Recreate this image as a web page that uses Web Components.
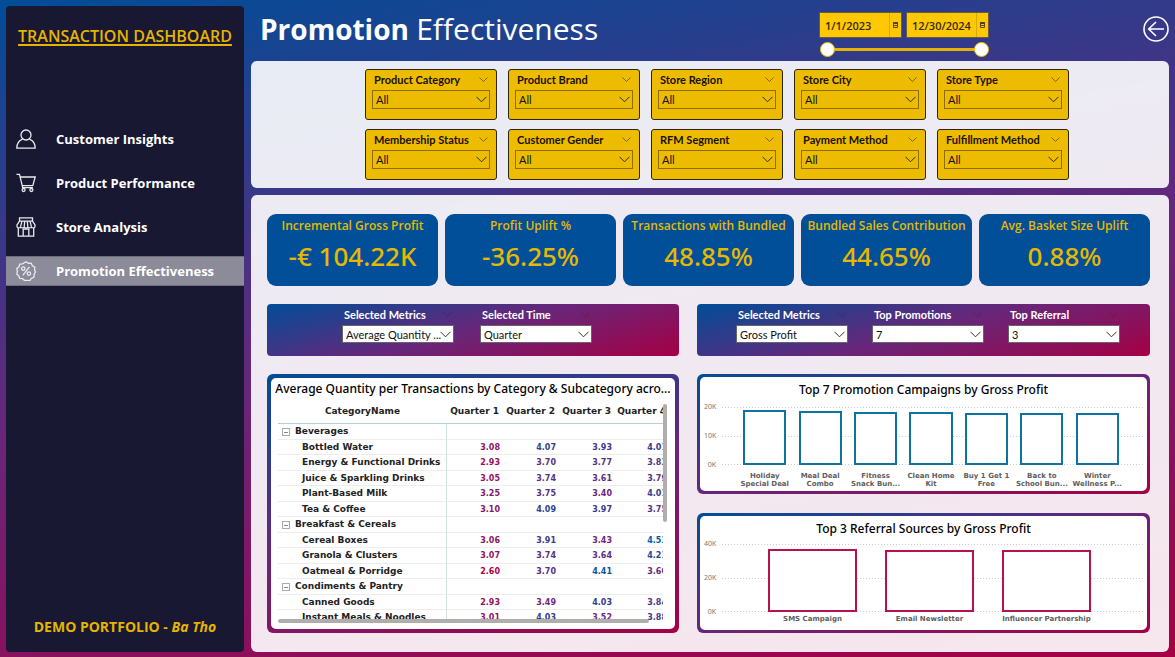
<!DOCTYPE html>
<html lang="en">
<head>
<meta charset="utf-8">
<meta name="viewport" content="width=device-width, initial-scale=1">
<title>Transaction Dashboard - Promotion Effectiveness</title>
<style>
  :root {
    --gold: #edbb00;
    --brand-stops: #004d98, #68267a 50%, #a50044;
    --brand: linear-gradient(165deg, var(--brand-stops));
    --data-font: "DejaVu Sans", Verdana, sans-serif;
    --compact-font: Lato, "Open Sans", sans-serif;
  }
  body {
    margin: 0;
    font-family: "Open Sans", "Noto Sans", sans-serif;
    background: linear-gradient(170deg, var(--brand-stops));
    min-height: 100vh;
  }
</style>
</head>
<body>
<dashboard-app></dashboard-app>

<script>
const define = (name, html) => customElements.define(name, class extends HTMLElement {
  constructor() {
    super();
    this.attachShadow({ mode: "open" });
  }
  connectedCallback() {
    const t = document.createElement("template");
    t.innerHTML = "<style>*{box-sizing:border-box}</style>" + (typeof html === "function" ? html(this) : html);
    this.shadowRoot.replaceChildren(t.content.cloneNode(true));
  }
});
const attr = (el, name) => el.getAttribute(name) || "";
const esc = s => s.replace(/&/g, "&amp;");

/* Line icons of the side menu */
const icons = {
  user: '<circle cx="10" cy="6" r="5"/><path d="M6.600 10.200C3 11.600.8 14.600.8 19.200h18.400C19.200 14.600 17 11.600 13.400 10.200"/>',
  cart: '<path d="M.5 1.300h3l3.200 13.400h10.200M4.600 4h14.600l-2.400 8.600H6.300"/><circle cx="7.600" cy="17" r="1.500"/><circle cx="15.400" cy="17" r="1.500"/>',
  store: '<path d="M3.500.8h13v3.400h-13zM3.500 4.200 1 8v1.400c0 2 3.600 2 3.600 0 0 2 3.600 2 3.600 0 0 2 3.600 2 3.600 0 0 2 3.600 2 3.600 0 0 2 3.600 2 3.600 0V8l-2.500-3.800M6 4.400 4.600 9.400M8.700 4.400l-.5 5M11.300 4.400l.5 5M14 4.400l1.400 5M2.300 11v8.200h15.400V11M7.200 19V12.200h5.600V19"/>',
  promo: '<path d="M10 .8l2.400 1.600 2.800-.2 1.200 2.500 2.400 1.500-.2 2.800L19.400 11l-1.300 2.500-.2 2.800-2.600 1.200-1.500 2.200-2.800-.3L8.400 19.300 6.600 17.700 3.800 17.500 2.700 14.900.800 13l.6-2.800L.8 7.500 3 5.800l.8-2.700 2.700-.3z"/><path d="M13.400 5.800 6.800 14.400"/><circle cx="7.300" cy="7.600" r="1.700"/><circle cx="12.900" cy="12.600" r="1.700"/>'
};

define("nav-item", el => `
  <style>
    :host { display: block; }
    a { display: flex; align-items: center; gap: 20px; height: 30px; padding: 0 10px; color: #fff; text-decoration: none; font-size: 13px; font-weight: 700; white-space: nowrap; border: 1px solid transparent; border-width: 1px 0; }
    a[aria-current] { background: #8b8b99; border-color: #6d6d7d; }
    svg { width: 20px; height: 20px; fill: none; stroke: #e9e9ee; stroke-width: 1.3; flex: none; }
  </style>
  <a href="#" ${el.hasAttribute("active") ? 'aria-current="page"' : ""}>
    <svg viewBox="0 0 20 20" aria-hidden="true">${icons[attr(el, "icon")]}</svg><slot></slot></a>`);

define("side-bar", `
  <style>
    :host { display: flex; flex-direction: column; background: #181832; border-radius: 4px; color: #e6b400; }
    h2 { margin: 18px 0 0; font-size: 16px; line-height: 24px; font-weight: 600; text-align: center; white-space: nowrap; text-decoration: underline 2px; text-underline-offset: 2px; text-decoration-skip-ink: none; }
    nav { display: grid; gap: 14px; margin-top: 76px; }
    footer { margin-top: auto; padding-bottom: 14px; font-size: 14px; line-height: 22px; font-weight: 700; text-align: center; }
  </style>
  <h2>TRANSACTION DASHBOARD</h2>
  <nav aria-label="Reports">
    <nav-item icon="user">Customer Insights</nav-item>
    <nav-item icon="cart">Product Performance</nav-item>
    <nav-item icon="store">Store Analysis</nav-item>
    <nav-item icon="promo" active>Promotion Effectiveness</nav-item>
  </nav>
  <footer>DEMO PORTFOLIO - <em>Ba Tho</em></footer>`);

const calendar = '<svg viewBox="0 0 11 8" aria-hidden="true"><path d="M3 1h5v2H3z" fill="#4a3d12"/><path d="M3.500 1.500h4v5h-4zM3 4.500h5" fill="none" stroke="#5b4a10"/></svg>';
define("date-range", `
  <style>
    :host { display: grid; grid-template-columns: 83px 83px; gap: 3px 4px; }
    .field { display: flex; align-items: center; height: 26px; background: #ffc800; border: 1px solid #6b5a3c; }
    input[type=text] { flex: 1; min-width: 0; height: 100%; padding: 0 0 0 5px; border: 0; border-right: 1px solid #d9a900; background: none; color: #332b14; font-size: 11px; font-weight: 600; font-family: inherit; }
    svg { width: 11px; height: 8px; flex: none; }
    .track { grid-column: 1 / -1; display: grid; height: 17px; align-items: center; background: linear-gradient(#e6b400, #e6b400) center / 150px 3px no-repeat; margin-left: 1px; }
    input[type=range] { grid-area: 1 / 1; appearance: none; width: 100%; height: 16px; margin: 0; background: none; pointer-events: none; }
    input[type=range]::-webkit-slider-thumb { appearance: none; width: 15px; height: 15px; border-radius: 50%; background: #fff; border: 1px solid #edbb00; pointer-events: auto; }
  </style>
  <div class="field"><input type="text" aria-label="Start date" value="1/1/2023">${calendar}</div>
  <div class="field"><input type="text" aria-label="End date" value="12/30/2024">${calendar}</div>
  <div class="track"><input type="range" aria-label="Range start" min="0" max="100" value="0"><input type="range" aria-label="Range end" min="0" max="100" value="100"></div>`);

define("page-header", `
  <style>
    :host { display: flex; align-items: flex-start; padding-left: 9px; height: 54px; color: #fff; }
    h1 { margin: 0; font-size: 28px; line-height: 46px; font-weight: 400; white-space: nowrap; flex: 0 0 559px; }
    h1 span { font-size: 30px; }
    date-range { margin-top: 6px; }
    button { margin: 10px 0 0 auto; padding: 0; border: 0; background: none; width: 26px; height: 26px; cursor: pointer; }
    svg { display: block; width: 26px; height: 26px; fill: none; stroke: #fff; stroke-width: 1.6; }
  </style>
  <h1><b>Promotion</b> <span>Effectiveness</span></h1>
  <date-range></date-range>
  <button aria-label="Back"><svg viewBox="0 0 26 26"><circle cx="13" cy="13" r="12"/><path d="M21 13H5.500M13 6l-7.300 7 7.300 7"/></svg></button>`);

/* A labelled drop-down; "card" puts it on a gold tile */
define("slicer-field", el => `
  <style>
    :host { display: block; font-family: var(--compact-font); color: #fff; }
    :host([card]) { color: #181000; background: var(--gold); border: 1px solid #2c260e; border-radius: 3px; padding: 0 6px 10px; }
    .top { display: flex; justify-content: space-between; align-items: center; height: 18px; padding: 0 2px; }
    label { font-size: 11px; font-weight: 700; white-space: nowrap; }
    .top svg { width: 9px; height: 5px; opacity: .6; flex: none; }
    .box { display: grid; align-items: center; margin-top: 2px; }
    select { grid-area: 1 / 1; appearance: none; width: 100%; height: 18px; padding: 0 0 0 3px; border: 1px solid #666; border-radius: 0; background: #fff; color: #111; font: inherit; font-size: 11px; }
    :host([card]) select { background: transparent; border-color: #8a6d08; height: 19px; }
    .box svg { grid-area: 1 / 1; justify-self: end; width: 11px; height: 7px; margin-right: 3px; pointer-events: none; }
    svg { fill: none; stroke: #33301f; }
  </style>
  <div class="top"><label for="s">${attr(el, "label")}</label><svg viewBox="0 0 9 5" aria-hidden="true"><path d="M.5.5l4 4 4-4"/></svg></div>
  <div class="box"><select id="s"><option>${attr(el, "value")}</option></select><svg viewBox="0 0 11 7" aria-hidden="true"><path d="M.5.8l5 5 5-5"/></svg></div>`);

define("filter-panel", () => `
  <style>
    :host { display: grid; grid-template-columns: repeat(5, 132px); gap: 9px 11px; justify-content: center; padding: 8px 0 8px 14px; background: rgba(255,255,255,.9); border-radius: 6px; }
  </style>
  ${["Product Category", "Product Brand", "Store Region", "Store City", "Store Type", "Membership Status", "Customer Gender", "RFM Segment", "Payment Method", "Fulfillment Method"]
    .map(l => `<slicer-field card label="${l}" value="All"></slicer-field>`).join("")}`);

define("kpi-card", el => `
  <style>
    :host { display: block; background: #004f98; color: #e6b800; border-radius: 9px; text-align: center; padding: 2px 0 10px; white-space: nowrap; }
    h3 { margin: 0; font-size: 12px; line-height: 20px; font-weight: 600; }
    p { margin: 0; font-family: "Noto Sans", sans-serif; font-weight: 500; font-size: 26px; line-height: 40px; }
  </style>
  <h3>${attr(el, "label")}</h3><p><slot></slot></p>`);

define("control-bar", `
  <style>
    :host { display: grid; grid-auto-flow: column; grid-auto-columns: 112px; justify-content: center; column-gap: 24px; padding: 1px 0 13px; background: var(--brand); border-radius: 4px; }
  </style>
  <slot></slot>`);

define("report-card", el => `
  <style>
    :host { display: flex; flex-direction: column; background: var(--brand); border-radius: 6px; padding: var(--frame, 4px); min-width: 0; }
    section { flex: 1; min-width: 0; background: #fff; border-radius: 5px; padding: 0 4px; display: flex; flex-direction: column; }
    h3 { margin: 0; font-family: "Noto Sans", sans-serif; font-size: 12px; line-height: var(--title-line, 22px); font-weight: 500; color: #000; text-align: center; white-space: nowrap; }
  </style>
  <section><h3>${esc(attr(el, "heading"))}</h3><slot></slot></section>`);

const rows = [
  ["Beverages"],
  ["Bottled Water", "3.08", "4.07", "3.93", "4.01"],
  ["Energy & Functional Drinks", "2.93", "3.70", "3.77", "3.83"],
  ["Juice & Sparkling Drinks", "3.05", "3.74", "3.61", "3.79"],
  ["Plant-Based Milk", "3.25", "3.75", "3.40", "4.01"],
  ["Tea & Coffee", "3.10", "4.09", "3.97", "3.75"],
  ["Breakfast & Cereals"],
  ["Cereal Boxes", "3.06", "3.91", "3.43", "4.53"],
  ["Granola & Clusters", "3.07", "3.74", "3.64", "4.21"],
  ["Oatmeal & Porridge", "2.60", "3.70", "4.41", "3.60"],
  ["Condiments & Pantry"],
  ["Canned Goods", "2.93", "3.49", "4.03", "3.84"],
  ["Instant Meals & Noodles", "3.01", "4.03", "3.52", "3.88"]
];
/* Red for low values, through purple, to blue for high ones */
const shade = v => {
  const stops = [[2.6, [176, 0, 72]], [3.55, [108, 42, 122]], [4.05, [52, 62, 142]], [4.53, [0, 92, 164]]];
  let i = 0;
  while (i < stops.length - 2 && v > stops[i + 1][0]) i++;
  const [a, ca] = stops[i], [b, cb] = stops[i + 1], t = (v - a) / (b - a);
  return `rgb(${ca.map((c, k) => Math.round(c + (cb[k] - c) * t)).join(",")})`;
};

define("quantity-matrix", () => `
  <style>
    :host { display: grid; grid-template-columns: minmax(0, 1fr) 4px; padding: 0 4px 6px 3px; font-family: var(--data-font); flex: 1; }
    .view { height: 223px; overflow: hidden; grid-area: 1 / 1; }
    table { border-collapse: separate; border-spacing: 0; table-layout: fixed; width: 392px; font-size: 9px; line-height: 13px; font-weight: 700; color: #222; }
    th, td { padding: 0; font-weight: 700; white-space: nowrap; }
    thead th { height: 24px; border-bottom: 1px solid #b5cdd6; padding-right: 4px; text-align: right; }
    thead th:first-child { text-align: center; padding: 0; }
    tbody th { text-align: left; border-right: 1px solid #cfe3e0; border-bottom: 1px solid #ededed; padding-left: 24px; }
    tbody td { text-align: right; border-bottom: 1px solid #ededed; font-size: 8px; padding-right: 3px; }
    tbody tr { height: 15px; }
    tbody tr:nth-child(odd) { height: 16px; }
    tbody th.group { padding-left: 4px; }
    button { width: 8px; height: 8px; margin: 0 5px 0 0; padding: 0; border: 1px solid #aaa; background: linear-gradient(#888, #888) center / 4px 1px no-repeat; vertical-align: -1px; }
    .bar { background: #b0aeac; border-radius: 2px; }
    .v { grid-area: 1 / 2; height: 118px; margin-top: 4px; }
    .h { grid-area: 1 / 1; align-self: end; height: 4px; width: 371px; }
  </style>
  <div class="view"><table>
    <colgroup><col style="width:169px"><col span="3" style="width:56px"><col style="width:55px"></colgroup>
    <thead><tr><th>CategoryName</th><th>Quarter 1</th><th>Quarter 2</th><th>Quarter 3</th><th>Quarter 4</th></tr></thead>
    <tbody>${rows.map(([n, ...v]) => v.length
      ? `<tr><th scope="row">${esc(n)}</th>${v.map(x => `<td style="color:${shade(+x)}">${x}</td>`).join("")}</tr>`
      : `<tr><th scope="row" class="group"><button aria-label="Collapse"></button>${esc(n)}</th><td></td><td></td><td></td><td></td></tr>`).join("")}</tbody>
  </table></div>
  <div class="bar v"></div><div class="bar h"></div>`);

/* Outlined column chart: max, ticks and a "name=value" list come from attributes */
define("column-chart", el => {
  const max = +attr(el, "max");
  const data = attr(el, "data").split(";").map(s => s.split("="));
  return `
  <style>
    :host { display: grid; grid-template-columns: 12px 1fr; column-gap: 6px; padding: var(--above) 0 0; font-family: var(--data-font); }
    .ticks { display: flex; flex-direction: column; justify-content: space-between; margin: -4px 0; font: 7px/8px "Noto Sans", sans-serif; color: #777; text-align: right; }
    .plot { height: var(--plot); border-top: 1px solid transparent; }
    .plot, .names { display: grid; grid-template-columns: repeat(${data.length}, minmax(0, 1fr)); padding: 0 var(--end) 0 var(--start); justify-items: center; }
    .plot { align-items: end; background:
      repeating-linear-gradient(90deg, transparent 0 1px, #fff 1px 3px),
      linear-gradient(#ccc, #ccc) top / 100% 1px no-repeat, linear-gradient(#ccc, #ccc) center / 100% 1px no-repeat, linear-gradient(#ccc, #ccc) bottom / 100% 1px no-repeat; background-origin: border-box; }
    .col { width: var(--bar); background: #fff; border: 2px solid var(--ink); }
    .names { grid-column: 2; font-size: 7px; line-height: 8px; font-weight: 700; color: #605e5c; text-align: center; padding-top: var(--drop); white-space: nowrap; }
  </style>
  <div class="ticks">${attr(el, "ticks").split(",").map(t => `<span>${t}</span>`).join("")}</div>
  <div class="plot">${data.map(d => `<div class="col" style="height:${d[1] / max * 100}%"></div>`).join("")}</div>
  <div class="names">${data.map(d => `<span>${d[0].replace("|", "<br>")}</span>`).join("")}</div>`;
});

define("report-panel", `
  <style>
    :host { display: grid; grid-template-columns: minmax(0, 412fr) minmax(0, 453fr); gap: 18px; align-content: start; padding: 19px 19px 19px 16px; background: rgba(255,255,255,.9); border-radius: 6px; }
    .kpis { grid-column: 1 / -1; display: grid; grid-template-columns: repeat(5, minmax(0, 1fr)); gap: 7px; }
    .charts { display: grid; grid-template-rows: 1fr 1fr; gap: 19px; min-width: 0; --frame: 3px; --title-line: 25px; }
    control-bar.left { column-gap: 26px; padding-right: 12px; }
    control-bar.right { padding-left: 9px; }
    .promo { --ink: #0f73a0; --above: 5px; --plot: 58px; --start: 15px; --end: 18px; --drop: 7px; --bar: 78%; }
    .referral { --ink: #b8114f; --above: 3px; --plot: 68px; --start: 32px; --end: 38px; --drop: 3px; --bar: 76%; }
  </style>
  <div class="kpis">
    <kpi-card label="Incremental Gross Profit">-€ 104.22K</kpi-card>
    <kpi-card label="Profit Uplift %">-36.25%</kpi-card>
    <kpi-card label="Transactions with Bundled">48.85%</kpi-card>
    <kpi-card label="Bundled Sales Contribution">44.65%</kpi-card>
    <kpi-card label="Avg. Basket Size Uplift">0.88%</kpi-card>
  </div>
  <control-bar class="left">
    <slicer-field label="Selected Metrics" value="Average Quantity ..."></slicer-field>
    <slicer-field label="Selected Time" value="Quarter"></slicer-field>
  </control-bar>
  <control-bar class="right">
    <slicer-field label="Selected Metrics" value="Gross Profit"></slicer-field>
    <slicer-field label="Top Promotions" value="7"></slicer-field>
    <slicer-field label="Top Referral" value="3"></slicer-field>
  </control-bar>
  <report-card heading="Average Quantity per Transactions by Category & Subcategory acro..."><quantity-matrix></quantity-matrix></report-card>
  <div class="charts">
    <report-card heading="Top 7 Promotion Campaigns by Gross Profit">
      <column-chart class="promo" max="20" ticks="20K,10K,0K" data="Holiday|Special Deal=19.4;Meal Deal|Combo=18.9;Fitness|Snack Bun...=18.6;Clean Home|Kit=18.6;Buy 1 Get 1|Free=18.3;Back to|School Bun...=18.2;Winter|Wellness P...=18.2"></column-chart>
    </report-card>
    <report-card heading="Top 3 Referral Sources by Gross Profit">
      <column-chart class="referral" max="40" ticks="40K,20K,0K" data="SMS Campaign=37.9;Email Newsletter=36.9;Influencer Partnership=36.9"></column-chart>
    </report-card>
  </div>`);

define("dashboard-app", `
  <style>
    :host { display: grid; grid-template-columns: 238px minmax(0, 1fr); column-gap: 7px; min-height: 100vh; padding: 6px 6px 5px; box-sizing: border-box; }
    main { display: grid; grid-template-rows: auto auto 1fr; row-gap: 7px; min-width: 0; }
    page-header { margin-bottom: -6px; }
  </style>
  <side-bar></side-bar>
  <main><page-header></page-header><filter-panel></filter-panel><report-panel></report-panel></main>`);
</script>
</body>
</html>
